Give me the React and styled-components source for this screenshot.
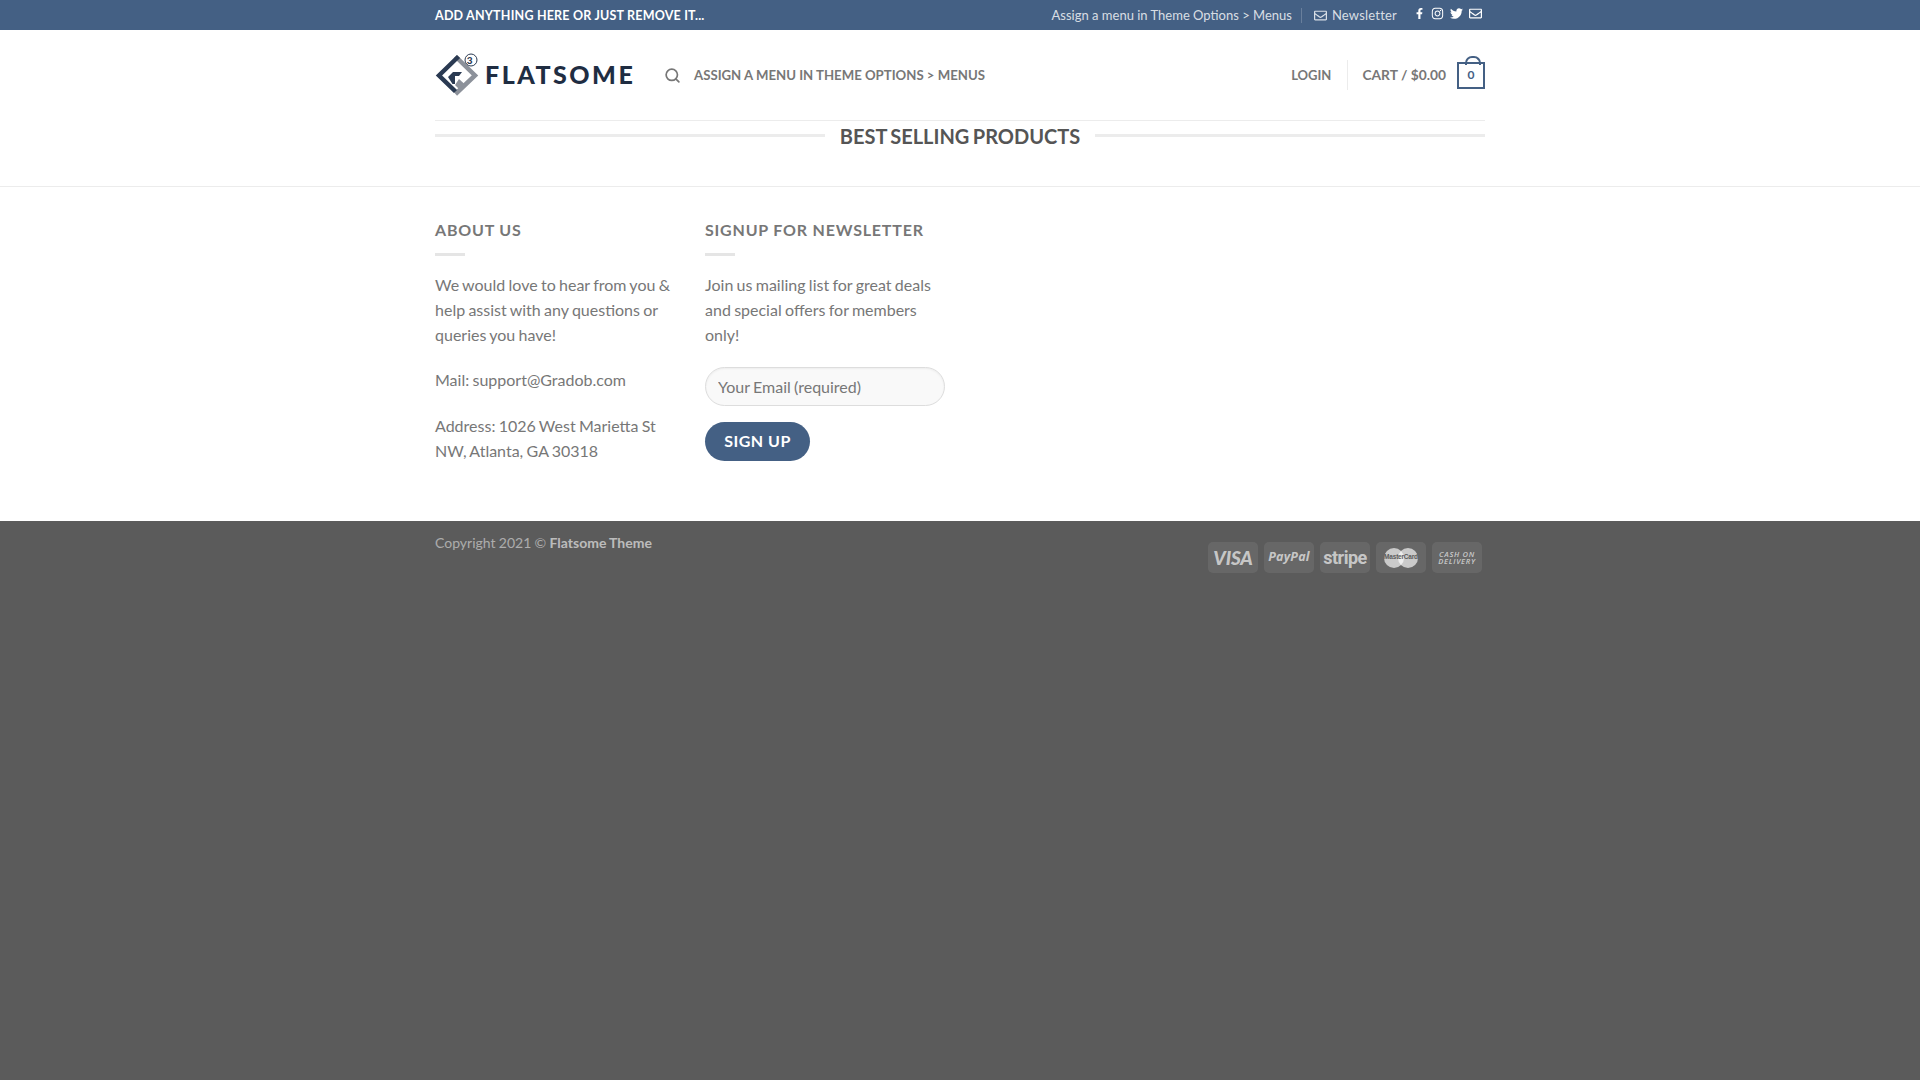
import React from "react";
import styled, { createGlobalStyle } from "styled-components";
import { FaFacebookF, FaInstagram, FaTwitter, FaRegEnvelope } from "react-icons/fa";
import { FiSearch } from "react-icons/fi";

const Global = createGlobalStyle`
  html, body { margin: 0; padding: 0; height: 100%; }
  body { font-family: Lato, "Liberation Sans", sans-serif; color: #777; background: #5b5b5b; }
  #root { min-height: 1080px; display: flex; flex-direction: column; }
  * { box-sizing: border-box; }
`;

const Container = styled.div`
  width: 1050px;
  margin: 0 auto;
  display: flex;
  align-items: ${p => p.$align || "center"};
  justify-content: ${p => p.$justify || "flex-start"};
`;

const TopBar = styled.div`
  height: 30px;
  background: #446084;
  color: rgba(255,255,255,.8);
  font-size: 13px;
  ${Container} { height: 30px; justify-content: space-between; }
`;
const TopLeft = styled.span`
  font-size: 12.5px;
  font-weight: 700;
  color: #fff;
  letter-spacing: .2px;
  text-transform: uppercase;
  padding-top: 1px;
`;
const TopRight = styled.div`
  display: flex;
  align-items: center;
  height: 100%;
`;
const TopLink = styled.span`
  display: inline-flex;
  align-items: center;
  gap: 5px;
  letter-spacing: ${p => p.$spacing || "0"};
`;
const TopDivider = styled.span`
  width: 1px;
  height: 15px;
  background: rgba(255,255,255,.2);
  margin: 0 12px 0 9px;
`;
const Socials = styled.div`
  display: flex;
  align-items: center;
  gap: 6px;
  margin-left: 17px;
  margin-right: 3px;
  color: #fff;
  font-size: 13px;
  padding-bottom: 3px;
  svg { display: block; }
`;

const Header = styled.header`
  background: #fff;
  height: 90px;
  ${Container} { height: 90px; }
`;
const Logo = styled.a`
  display: flex;
  align-items: center;
  width: 200px;
  color: #1f2d42;
  font-weight: 900;
  font-size: 25px;
  letter-spacing: 2.5px;
  line-height: 1;
  gap: 6px;
  svg { flex: none; }
`;
const LogoText = styled.span`
  padding-bottom: 2px;
`;
const SearchIcon = styled.span`
  display: flex;
  margin-left: 29px;
  color: #777;
  font-size: 17px;
  svg { stroke-width: 2.4; }
`;
const Nav = styled.nav`
  margin-left: 13px;
  padding-bottom: 1px;
  font-size: 13.2px;
  font-weight: 700;
  color: #777;
  text-transform: uppercase;
`;
const HeaderRight = styled.div`
  margin-left: auto;
  display: flex;
  align-items: center;
  color: #777;
`;
const HeaderLabel = styled.span`
  padding-bottom: ${p => p.$pad || "1px"};
  font-weight: 700;
  font-size: ${p => p.$size || "13px"};
`;
const VDivider = styled.span`
  width: 1px;
  height: 30px;
  background: #ececec;
  margin: 0 14px 0 16px;
`;
const CartBox = styled.span`
  position: relative;
  width: 28px;
  height: 27px;
  margin-left: 11px;
  margin-top: 1px;
  padding-bottom: 2px;
  border: 2px solid #446084;
  color: #446084;
  font-size: 12px;
  font-weight: 700;
  display: flex;
  align-items: center;
  justify-content: center;
  &::before {
    content: "";
    position: absolute;
    left: 6px;
    top: -8px;
    width: 12px;
    height: 7px;
    border: 2px solid #446084;
    border-bottom: 0;
    border-radius: 7px 7px 0 0;
  }
`;

const Main = styled.main`
  background: #fff;
  height: 67px;
  border-bottom: 1px solid #ececec;
`;
const TitleWrap = styled.div`
  width: 1050px;
  margin: 0 auto;
  height: 30px;
  border-top: 1px solid #ececec;
  display: flex;
  align-items: center;
  gap: 15px;
`;
const TitleLine = styled.span`
  flex: 1;
  height: 3px;
  background: #ececec;
`;
const Title = styled.h2`
  margin: 0;
  font-size: 20px;
  line-height: 30px;
  font-weight: 700;
  word-spacing: -1.4px;
  color: #555;
  text-transform: uppercase;
`;

const Widgets = styled.section`
  background: #fff;
  height: 334px;
  padding-top: 30px;
`;
const WidgetRow = styled.div`
  width: 1050px;
  margin: 0 auto;
  display: flex;
  gap: 30px;
  align-items: flex-start;
`;
const Widget = styled.div`
  width: 240px;
`;
const WidgetTitle = styled.h3`
  margin: 0;
  font-size: 16px;
  line-height: 26px;
  font-weight: 700;
  letter-spacing: .8px;
  color: #777;
  text-transform: uppercase;
`;
const SmallDivider = styled.div`
  width: 30px;
  height: 3px;
  background: rgba(0,0,0,.1);
  margin: 10px 0 16px;
`;
const Para = styled.p`
  margin: 0 0 ${p => p.$gap || "21px"};
  font-size: 16px;
  line-height: 25px;
  word-spacing: -.8px;
  color: #777;
`;
const Input = styled.input`
  display: block;
  width: 240px;
  height: 39px;
  padding: 0 12px;
  border: 1px solid #ddd;
  border-radius: 99px;
  background: #f9f9f9;
  font: 16px Lato, sans-serif;
  word-spacing: -.8px;
  color: #777;
  margin: -1px 0 16px;
  box-shadow: inset 0 1px 2px rgba(0,0,0,.05);
  &::placeholder { color: #777; opacity: 1; }
`;
const SignUp = styled.button`
  display: block;
  width: 105px;
  height: 39px;
  padding: 0 0 2px;
  border: 0;
  border-radius: 99px;
  background: #446084;
  color: #fff;
  font: 700 16px Lato, sans-serif;
  letter-spacing: .5px;
  text-transform: uppercase;
`;

const Footer = styled.footer`
  flex: 1;
  background: #5b5b5b;
  padding-top: 12px;
  color: rgba(255,255,255,.5);
  font-size: 14px;
`;
const Copyright = styled.div`
  line-height: 20px;
  word-spacing: -.3px;
  strong { color: rgba(255,255,255,.6); font-weight: 700; }
`;
const Payments = styled.div`
  margin-left: auto;
  margin-right: 3px;
  margin-top: 9px;
  display: flex;
  gap: 6px;
`;
const Pay = styled.div`
  width: 50px;
  height: 31px;
  border-radius: 5px;
  background: rgba(255,255,255,.08);
  color: rgba(255,255,255,.65);
  display: flex;
  align-items: center;
  justify-content: center;
  text-align: center;
`;
const VisaText = styled.span`
  font: italic 900 19px/1 Lato, sans-serif;
  letter-spacing: -.2px;
`;
const PaypalText = styled.span`
  font: italic 700 12.5px/1 "Open Sans", sans-serif;
  letter-spacing: .2px;
`;
const StripeText = styled.span`
  font: 700 18px/1 Roboto, sans-serif;
  letter-spacing: -.5px;
`;
const McCircles = styled.span`
  position: relative;
  width: 34px;
  height: 20px;
  display: flex;
  align-items: center;
  justify-content: center;
  color: #5b5b5b;
  font: 700 6.5px/1 "Liberation Sans", sans-serif;
  &::before, &::after {
    content: "";
    position: absolute;
    top: 0;
    width: 20px;
    height: 20px;
    border-radius: 50%;
    background: rgba(255,255,255,.65);
  }
  &::before { left: 0; }
  &::after { right: 0; }
  b { position: relative; z-index: 1; font-weight: 700; letter-spacing: -.2px; }
`;
const CodText = styled.span`
  font: italic 600 7.5px/7px "Open Sans", sans-serif;
  letter-spacing: .7px;
`;

const LogoMark = () => (
  <svg width="44" height="44" viewBox="0 0 44 44" fill="none">
    <path d="M20.5 3.5 L40 22.5 L20.5 41" stroke="#8c919a" strokeWidth="4.5" strokeLinejoin="miter" />
    <path d="M23.5 3.5 L4 22.5 L20.5 38.5" stroke="#2a3a52" strokeWidth="4.5" strokeLinejoin="miter" />
    <path d="M13 24 L18 19 L27 19 L24 23 L20 23 L20 31 L17.5 31 Z" fill="#2a3a52" />
    <path d="M24 26 L29.5 31 L24 36 L20 32 Z" fill="#8c919a" />
    <circle cx="36" cy="7" r="6" fill="#fff" stroke="#2a3a52" strokeWidth="1" />
    <text x="36" y="10.5" textAnchor="middle" fontSize="10" fontFamily="Lato" fill="#2a3a52">3</text>
  </svg>
);

export default function App() {
  return (
    <>
      <Global />
      <TopBar>
        <Container>
          <TopLeft>Add anything here or just remove it...</TopLeft>
          <TopRight>
            <TopLink>Assign a menu in Theme Options &gt; Menus</TopLink>
            <TopDivider />
            <TopLink $spacing=".2px"><FaRegEnvelope size={13} /> Newsletter</TopLink>
            <Socials>
              <FaFacebookF size={11} />
              <FaInstagram size={13} />
              <FaTwitter size={13} />
              <FaRegEnvelope size={13} />
            </Socials>
          </TopRight>
        </Container>
      </TopBar>
      <Header>
        <Container>
          <Logo><LogoMark /><LogoText>FLATSOME</LogoText></Logo>
          <SearchIcon><FiSearch /></SearchIcon>
          <Nav>Assign a menu in Theme Options &gt; Menus</Nav>
          <HeaderRight>
            <HeaderLabel>LOGIN</HeaderLabel>
            <VDivider />
            <HeaderLabel $size="13.8px" $pad="2px">CART / $0.00</HeaderLabel>
            <CartBox>0</CartBox>
          </HeaderRight>
        </Container>
      </Header>
      <Main>
        <TitleWrap>
          <TitleLine />
          <Title>Best Selling Products</Title>
          <TitleLine />
        </TitleWrap>
      </Main>
      <Widgets>
        <WidgetRow>
          <Widget>
            <WidgetTitle>About us</WidgetTitle>
            <SmallDivider />
            <Para $gap="20px">We would love to hear from you &amp; help assist with any questions or queries you have!</Para>
            <Para>Mail: support@Gradob.com</Para>
            <Para>Address: 1026 West Marietta St NW, Atlanta, GA 30318</Para>
          </Widget>
          <Widget>
            <WidgetTitle>Signup for newsletter</WidgetTitle>
            <SmallDivider />
            <Para>Join us mailing list for great deals and special offers for members only!</Para>
            <Input placeholder="Your Email (required)" />
            <SignUp>Sign up</SignUp>
          </Widget>
        </WidgetRow>
      </Widgets>
      <Footer>
        <Container $align="flex-start">
          <Copyright>Copyright 2021 © <strong>Flatsome Theme</strong></Copyright>
          <Payments>
            <Pay><VisaText>VISA</VisaText></Pay>
            <Pay><PaypalText>PayPal</PaypalText></Pay>
            <Pay><StripeText>stripe</StripeText></Pay>
            <Pay><McCircles><b>MasterCard</b></McCircles></Pay>
            <Pay><CodText>CASH ON<br />DELIVERY</CodText></Pay>
          </Payments>
        </Container>
      </Footer>
    </>
  );
}
